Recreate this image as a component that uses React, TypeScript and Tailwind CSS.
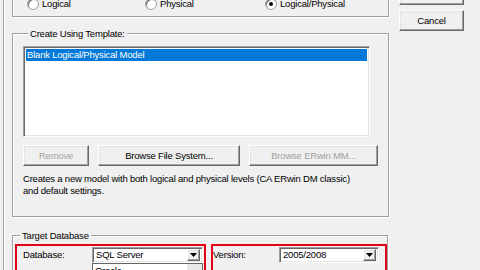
import React from 'react'

const raised =
  'bg-[#f0f0f0] border border-t-white border-l-white border-b-[#696969] border-r-[#696969] shadow-[inset_-1px_-1px_0_#a0a0a0,inset_1px_1px_0_#e3e3e3]'
const sunken =
  'bg-white border border-t-[#a0a0a0] border-l-[#a0a0a0] border-b-white border-r-white shadow-[inset_1px_1px_0_#696969,inset_-1px_-1px_0_#e3e3e3]'
const etched = 'border border-[#a0a0a0] shadow-[inset_1px_1px_0_#ffffff,1px_1px_0_#ffffff]'

function Radio({ label, checked }: { label: string; checked?: boolean }) {
  return (
    <div className="flex items-center gap-[3px]">
      <span className="w-[12px] h-[12px] rounded-full bg-white border border-[#a0a0a0] shadow-[inset_1px_1px_0_#696969] flex items-center justify-center">
        {checked && <span className="w-[4px] h-[4px] rounded-full bg-black" />}
      </span>
      <span>{label}</span>
    </div>
  )
}

function Combo({ value, width }: { value: string; width: string }) {
  return (
    <div className={`${sunken} ${width} h-[16px] flex items-center pl-[3px] pr-[2px]`}>
      <span className="flex-1 leading-none">{value}</span>
      <span className={`${raised} w-[13px] h-[12px] flex items-center justify-center`}>
        <svg width="7" height="4" viewBox="0 0 7 4">
          <path d="M0 0h7L3.5 4z" fill="#000" />
        </svg>
      </span>
    </div>
  )
}

export default function App() {
  return (
    <div className="flex w-[480px] h-[270px] overflow-hidden bg-[#f0f0f0] font-['Liberation_Sans',Arial,sans-serif] text-[9.5px] tracking-[-0.2px] text-black leading-[12px]">
      {/* left pane */}
      <div className="ml-[3px] w-[386px] shrink-0 border-l border-[#a0a0a0] shadow-[inset_1px_0_0_#ffffff] pl-[8px] flex flex-col">
        {/* model type radios */}
        <div className={`${etched} shrink-0 -mt-[20px] h-[37px] w-[377px] pt-[17px] pl-[14px] flex items-start`}>
          <div className="w-[118px]"><Radio label="Logical" /></div>
          <div className="w-[120px]"><Radio label="Physical" /></div>
          <div><Radio label="Logical/Physical" checked /></div>
        </div>

        {/* template */}
        <fieldset className={`${etched} shrink-0 mt-[10px] w-[377px] h-[190px] pl-[10px] pt-[6px]`}>
          <legend className="ml-[5px] px-[2px] bg-[#f0f0f0] leading-[13px]">Create Using Template:</legend>
          <div className={`${sunken} w-[347px] h-[91px] p-[2px]`}>
            <div className="bg-[#0078d7] text-white h-[12px] leading-[12px] pl-[1px]">Blank Logical/Physical Model</div>
          </div>
          <div className="flex gap-[9px] mt-[8px]">
            <button className={`${raised} w-[66px] h-[21px] text-[#a0a0a0]`}>Remove</button>
            <button className={`${raised} w-[142px] h-[21px]`}>Browse File System...</button>
            <button className={`${raised} w-[129px] h-[21px] text-[#a0a0a0]`}>Browse ERwin MM...</button>
          </div>
          <p className="mt-[7px] leading-[12px]">
            Creates a new model with both logical and physical levels (CA ERwin DM classic)
            <br />
            and default settings.
          </p>
        </fieldset>

        {/* target database */}
        <fieldset className={`${etched} shrink-0 mt-[12px] w-[376px] h-[60px] pl-[2px] pt-[2px]`}>
          <legend className="ml-[5px] px-[2px] bg-[#f0f0f0] leading-[13px]">Target Database</legend>
          <div className="flex gap-[5px]">
            <div className="w-[191px] h-[40px] border-2 border-[#e2001a] pl-[6px] pt-[1px]">
              <div className="flex items-center">
                <span className="w-[69px]">Database:</span>
                <Combo value="SQL Server" width="w-[111px]" />
              </div>
              <div className="ml-[69px] w-[111px] h-[20px] bg-white border border-[#646464] flex">
                <span className="flex-1 pl-[2px] pt-[1px]">Oracle</span>
                <span className="w-[15px] bg-[#e8e8e8]" />
              </div>
            </div>
            <div className="w-[176px] h-[40px] border-2 border-[#e2001a] pt-[1px]">
              <div className="flex items-center">
                <span className="w-[66px]">Version:</span>
                <Combo value="2005/2008" width="w-[100px]" />
              </div>
            </div>
          </div>
        </fieldset>
      </div>

      {/* buttons */}
      <div className="ml-[10px] flex flex-col gap-[5px] -mt-[16px]">
        <button className={`${raised} shrink-0 w-[65px] h-[21px]`}>OK</button>
        <button className={`${raised} shrink-0 w-[65px] h-[21px]`}>Cancel</button>
      </div>
    </div>
  )
}
